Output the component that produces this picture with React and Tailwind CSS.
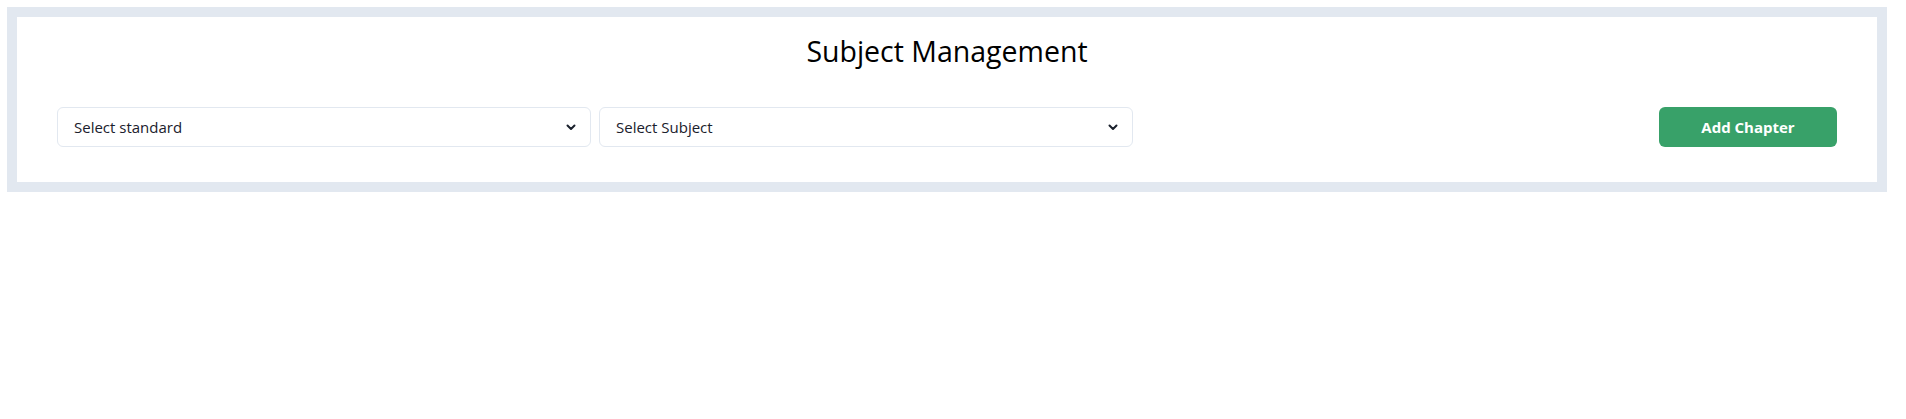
import React from "react";

function Chevron() {
  return (
    <svg width="10" height="7" viewBox="0 0 10 7" className="shrink-0">
      <path d="M1.5 1.5 L5 5 L8.5 1.5" fill="none" stroke="#1a202c" strokeWidth="2" strokeLinecap="round" strokeLinejoin="round" />
    </svg>
  );
}

function Select({ label }) {
  return (
    <div className="w-[30%] h-10 border border-[#e2e8f0] rounded-md bg-white flex items-center justify-between pl-4 pr-[14px] text-[15px] text-[#1a202c]">
      <span>{label}</span>
      <Chevron />
    </div>
  );
}

export default function App() {
  return (
    <div className="w-[1906px] h-[419px] bg-white" style={{ fontFamily: '"Open Sans", "Noto Sans", sans-serif' }}>
      <div className="ml-[7px] mt-[7px] w-[1880px] border-[10px] border-[#e2e8f0] bg-white">
        <div className="px-10 pt-[17px] pb-[35px]">
          <h1 className="text-center text-[28.5px] leading-[34px] text-black font-normal">Subject Management</h1>
          <div className="mt-[39px] flex items-center">
            <Select label="Select standard" />
            <div className="w-2" />
            <Select label="Select Subject" />
            <div className="flex-1" />
            <button className="w-[178px] h-10 rounded-md bg-[#38a169] text-white font-bold text-[15px]">Add Chapter</button>
          </div>
        </div>
      </div>
    </div>
  );
}
